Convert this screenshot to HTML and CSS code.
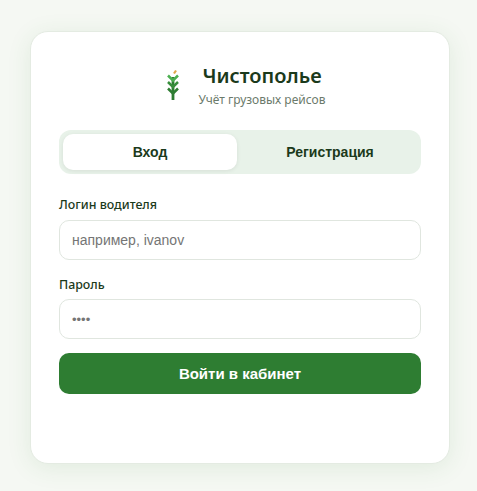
FILE: index.html
```html
<!DOCTYPE html>
<html lang="ru">

<head>
  <meta name="viewport" content="width=device-width, initial-scale=1.0">
  <link rel="stylesheet" href="styles.css">
</head>

<body>
  <div class="card">
    <div class="brand">
      <svg class="logo" width="24" height="34" viewBox="0 0 24 34">
        <path d="M12 9V32" stroke="#2e7d32" stroke-width="2.8" fill="none"/>
        <path d="M7 7.5L12 12.5L17 7.5" stroke="#4caf50" stroke-width="2.5" fill="none"/>
        <path d="M7 14L12 19L17 14" stroke="#388e3c" stroke-width="2.5" fill="none"/>
        <path d="M7 20.5L12 25.5L17 20.5" stroke="#2e7d32" stroke-width="2.5" fill="none"/>
        <path d="M13 5.5L15 2.5" stroke="#e0a64a" stroke-width="2.2" fill="none"/>
      </svg>
      <div class="brand-text">
        <div class="brand-name">Чистополье</div>
        <div class="brand-sub">Учёт грузовых рейсов</div>
      </div>
    </div>

    <div class="tabs">
      <button class="tab active">Вход</button>
      <button class="tab">Регистрация</button>
    </div>

    <form class="form">
      <label class="label" for="login">Логин водителя</label>
      <input class="input" id="login" type="text" placeholder="например, ivanov">
      <label class="label label-second" for="pass">Пароль</label>
      <input class="input input-pass" id="pass" type="password" placeholder="••••">
      <button class="submit" type="button">Войти в кабинет</button>
    </form>
  </div>
</body>

</html>
```

FILE: styles.css
```css
* {
  box-sizing: border-box;
}

body {
  margin: 0;
  height: 491px;
  overflow: hidden;
  padding: 31px 27px 0 30px;
  background: #f5f8f3;
  font-family: 'Noto Sans', sans-serif;
}

.card {
  width: 420px;
  height: 433px;
  padding: 25px 28px;
  background: #fff;
  border: 1px solid #e4ebe2;
  border-radius: 18px;
  box-shadow: 0 4px 24px rgba(46, 125, 50, 0.1);
}

.brand {
  display: flex;
  justify-content: center;
  align-items: center;
  gap: 14px;
  height: 56px;
  margin-bottom: 17px;
  padding-left: 6px;
}

.logo {
  flex-shrink: 0;
}

.brand-text {
  text-align: center;
  padding-top: 1px;
}

.brand-name {
  font-size: 20px;
  font-weight: 600;
  line-height: 26px;
  color: #1b3a1b;
}

.brand-sub {
  font-size: 12px;
  line-height: 18px;
  margin-top: 2px;
  color: #6b7a6b;
}

.tabs {
  display: flex;
  gap: 6px;
  height: 44px;
  padding: 4px;
  background: #e8f2e9;
  border-radius: 12px;
}

.tab {
  flex: 1;
  border: none;
  background: transparent;
  border-radius: 10px;
  font-family: 'Liberation Sans', sans-serif;
  font-size: 14px;
  font-weight: 700;
  color: #1b3a1b;
  cursor: pointer;
}

.tab.active {
  background: #fff;
  box-shadow: 0 1px 4px rgba(0, 0, 0, 0.08);
}

.form {
  display: flex;
  flex-direction: column;
  margin-top: 22px;
}

.label {
  font-size: 12.4px;
  font-weight: 500;
  line-height: 18px;
  margin-bottom: 6px;
  color: #1b3a1b;
}

.label-second {
  margin-top: 16px;
  margin-bottom: 5px;
}

.input {
  height: 40px;
  padding: 0 12px;
  border: 1px solid #e0e6df;
  border-radius: 10px;
  background: #fff;
  font-family: 'Liberation Sans', sans-serif;
  font-size: 14px;
  color: #1b3a1b;
}

.input::placeholder {
  color: #757575;
}

.input-pass::placeholder {
  font-size: 13px;
}

.submit {
  height: 41px;
  margin-top: 14px;
  border: none;
  border-radius: 10px;
  background: #2e7d32;
  color: #fff;
  font-family: 'Liberation Sans', sans-serif;
  font-size: 15px;
  font-weight: 700;
  cursor: pointer;
}
```
